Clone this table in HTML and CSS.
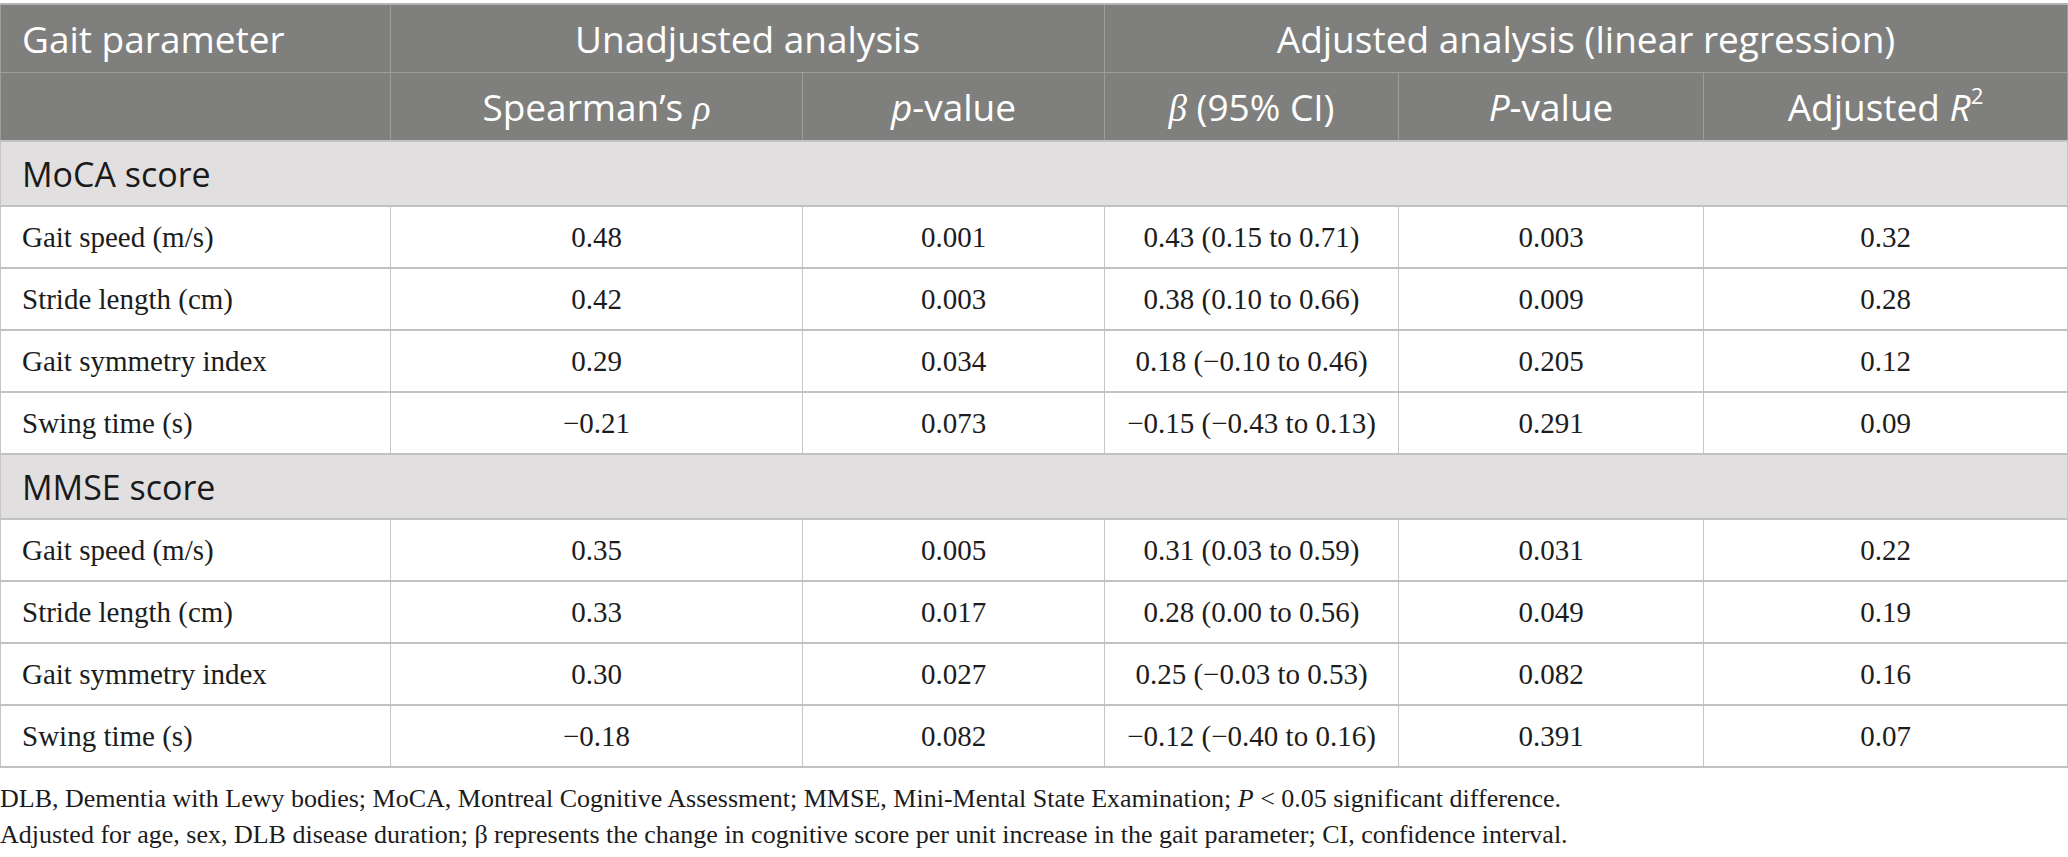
FILE: index.html
```html
<!DOCTYPE html>
<html lang="en">
<head>
<meta charset="utf-8">
<title>Gait parameters and cognition</title>
<link rel="stylesheet" href="styles.css">
</head>
<body>
<div class="page">
<table class="gait-table">
  <colgroup>
    <col class="c1"><col class="c2"><col class="c3"><col class="c4"><col class="c5"><col class="c6">
  </colgroup>
  <thead>
    <tr class="hrow1">
      <th class="left">Gait parameter</th>
      <th colspan="2">Unadjusted analysis</th>
      <th colspan="3">Adjusted analysis (linear regression)</th>
    </tr>
    <tr class="hrow2">
      <th class="left blank"></th>
      <th>Spearman’s <span class="greek">ρ</span></th>
      <th><i>p</i>-value</th>
      <th><span class="greek">β</span> (95% CI)</th>
      <th><i>P</i>-value</th>
      <th>Adjusted <i>R</i><sup>2</sup></th>
    </tr>
  </thead>
  <tbody>
    <tr class="section"><td colspan="6">MoCA score</td></tr>
    <tr><td class="left">Gait speed (m/s)</td><td>0.48</td><td>0.001</td><td>0.43 (0.15 to 0.71)</td><td>0.003</td><td>0.32</td></tr>
    <tr><td class="left">Stride length (cm)</td><td>0.42</td><td>0.003</td><td>0.38 (0.10 to 0.66)</td><td>0.009</td><td>0.28</td></tr>
    <tr><td class="left">Gait symmetry index</td><td>0.29</td><td>0.034</td><td>0.18 (−0.10 to 0.46)</td><td>0.205</td><td>0.12</td></tr>
    <tr><td class="left">Swing time (s)</td><td>−0.21</td><td>0.073</td><td>−0.15 (−0.43 to 0.13)</td><td>0.291</td><td>0.09</td></tr>
    <tr class="section"><td colspan="6">MMSE score</td></tr>
    <tr><td class="left">Gait speed (m/s)</td><td>0.35</td><td>0.005</td><td>0.31 (0.03 to 0.59)</td><td>0.031</td><td>0.22</td></tr>
    <tr><td class="left">Stride length (cm)</td><td>0.33</td><td>0.017</td><td>0.28 (0.00 to 0.56)</td><td>0.049</td><td>0.19</td></tr>
    <tr><td class="left">Gait symmetry index</td><td>0.30</td><td>0.027</td><td>0.25 (−0.03 to 0.53)</td><td>0.082</td><td>0.16</td></tr>
    <tr><td class="left">Swing time (s)</td><td>−0.18</td><td>0.082</td><td>−0.12 (−0.40 to 0.16)</td><td>0.391</td><td>0.07</td></tr>
  </tbody>
</table>
<div class="notes">
  <p>DLB, Dementia with Lewy bodies; MoCA, Montreal Cognitive Assessment; MMSE, Mini-Mental State Examination; <i>P</i> &lt; 0.05 significant difference.</p>
  <p>Adjusted for age, sex, DLB disease duration; β represents the change in cognitive score per unit increase in the gait parameter; CI, confidence interval.</p>
</div>
</div>
</body>
</html>
```
FILE: styles.css
```css
html, body {
  margin: 0;
  padding: 0;
  background: #ffffff;
}

.page {
  padding-top: 3px;
  width: 2068px;
}

.gait-table {
  width: 2067px;
  border-collapse: collapse;
  table-layout: fixed;
  font-family: "Liberation Serif", "Times New Roman", serif;
  color: #1c1c1c;
}

.c1 { width: 390px; }
.c2 { width: 412px; }
.c3 { width: 302px; }
.c4 { width: 294px; }
.c5 { width: 305px; }
.c6 { width: 364px; }

.gait-table thead th {
  background: #7f807e;
  color: #ffffff;
  font-family: "Open Sans", "Noto Sans", sans-serif;
  font-weight: 400;
  font-size: 37px;
  text-align: center;
  border: 1px solid #9c9d9b;
  padding: 0 8px;
  white-space: nowrap;
}

.gait-table thead tr.hrow1 th {
  border-top: 2px solid #b4b4b4;
}

.gait-table thead th.left {
  text-align: left;
  padding-left: 21px;
}

.gait-table thead th.blank {
  border-top-color: #7f807e;
}

.hrow1 { height: 68px; }
.hrow2 { height: 69px; }

.greek {
  font-family: "Liberation Serif", "Times New Roman", serif;
  font-style: italic;
}

.gait-table sup {
  font-size: 60%;
  line-height: 0;
  vertical-align: 0.75em;
}

.gait-table tbody td {
  font-size: 29px;
  text-align: center;
  border-left: 1px solid #c6c6c6;
  border-right: 1px solid #c6c6c6;
  border-top: 2px solid #c2c2c2;
  border-bottom: 2px solid #c2c2c2;
  padding: 0 8px;
  height: 60px;
  white-space: nowrap;
}

.gait-table tbody td.left {
  text-align: left;
  padding-left: 21px;
}

.gait-table tbody tr.section td {
  background: #e1dfe0;
  font-family: "Open Sans", "Noto Sans", sans-serif;
  font-size: 34px;
  color: #1a1a1a;
  text-align: left;
  padding-left: 21px;
  height: 63px;
}

.notes {
  font-family: "Liberation Serif", "Times New Roman", serif;
  font-size: 26px;
  color: #1c1c1c;
  padding-top: 13px;
}

.notes p {
  margin: 0;
  line-height: 36px;
}
```
